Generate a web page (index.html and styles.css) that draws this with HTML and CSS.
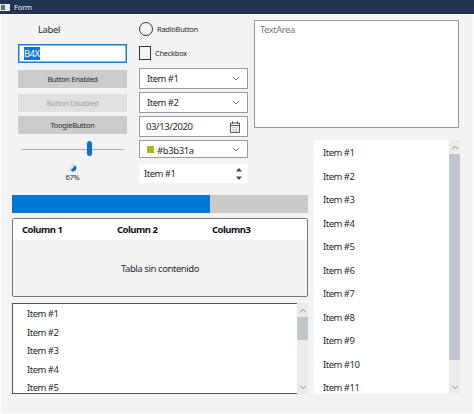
FILE: index.html
```
<!DOCTYPE html>
<html lang="en">
<head>
<meta charset="utf-8">
<title>Form</title>
<link rel="stylesheet" href="styles.css">
</head>
<body>
<header class="titlebar"><span class="app-icon"></span><span>Form</span></header>
<main class="form">
  <section class="controls">
    <div class="col basic">
      <div class="label">Label</div>
      <div class="input"><span class="selected">B4X</span></div>
      <div class="button">Button Enabled</div>
      <div class="button disabled">Button Disabled</div>
      <div class="button toggle">ToogleButton</div>
      <div class="slider"><span class="thumb"></span></div>
      <div class="indicator">
        <svg width="8" height="8" viewBox="0 0 8 8"><circle cx="4" cy="4" r="3.5" fill="#b5d8f8"/><path d="M4 4 6 1.500A3.200 3.200 0 0 1 2 6.500Z" fill="#0f62bc"/><path d="M4 4H1.500V1.500H4Z" fill="#f4f9ff"/></svg>
        <span class="pct">67%</span>
      </div>
    </div>
    <div class="col choices">
      <div class="option radio"><span class="circle"></span><span>RadioButton</span></div>
      <div class="option check"><span class="box"></span><span>Checkbox</span></div>
      <div class="combo"><span>Item #1</span><svg class="chev" viewBox="0 0 8 5"><path d="M.7.7 4 4 7.3.7"/></svg></div>
      <div class="combo"><span>Item #2</span><svg class="chev" viewBox="0 0 8 5"><path d="M.7.7 4 4 7.3.7"/></svg></div>
      <div class="combo date"><span>03/13/2020</span><svg class="cal" viewBox="0 0 10 12"><path d="M.5 2h9v9.5h-9ZM.5 4.5h9M2.5.3V3M7.5.3V3"/><path class="grid" d="M2 6.5h6M2 8.3h6M2 10h6M3.5 5.5v5.500M6.500 5.500v5.500"/></svg></div>
      <div class="combo color"><span class="swatch"></span><span class="hex">#b3b31a</span><svg class="chev" viewBox="0 0 8 5"><path d="M.7.7 4 4 7.3.7"/></svg></div>
      <div class="spinner"><span>Item #1</span><svg width="6" height="12" viewBox="0 0 6 12"><path d="M0 3.500 3 0l3 3.500ZM0 8.500h6L3 12Z" fill="#444"/></svg></div>
    </div>
  </section>
  <div class="textarea">TextArea</div>
  <section class="list large">
    <ul>
      <li>Item #1</li><li>Item #2</li><li>Item #3</li><li>Item #4</li><li>Item #5</li><li>Item #6</li><li>Item #7</li><li>Item #8</li><li>Item #9</li><li>Item #10</li><li>Item #11</li>
    </ul>
    <div class="scroll"><svg class="arrow" viewBox="0 0 8 5"><path d="M1.200 4.300 4 1.300l2.800 3"/></svg><span class="bar"></span><svg class="arrow" viewBox="0 0 8 5"><path d="M1.200.700 4 3.700 6.800.700"/></svg></div>
  </section>
  <section class="bottom">
    <div class="progress"><span class="fill"></span></div>
    <div class="table">
      <div class="head"><span>Column 1</span><span>Column 2</span><span>Column3</span></div>
      <div class="empty">Tabla sin contenido</div>
    </div>
    <section class="list small">
      <ul><li>Item #1</li><li>Item #2</li><li>Item #3</li><li>Item #4</li><li>Item #5</li></ul>
      <div class="scroll"><svg class="arrow" viewBox="0 0 8 5"><path d="M1.200 4.300 4 1.300l2.800 3"/></svg><span class="bar"></span><svg class="arrow" viewBox="0 0 8 5"><path d="M1.200.700 4 3.700 6.800.700"/></svg></div>
    </section>
  </section>
</main>
</body>
</html>
```
FILE: styles.css
```
* { box-sizing: border-box; }
body {
  margin: 0;
  width: 474px;
  height: 414px;
  overflow: hidden;
  background: #fafafa;
  color: #2b2b2b;
  font: 9.5px/12px "Noto Sans", "Open Sans", sans-serif;
  letter-spacing: -0.5px;
}
.titlebar {
  display: flex;
  align-items: center;
  gap: 4px;
  height: 14px;
  background: #213454;
  color: #f0f2f5;
  font-size: 7.5px;
  letter-spacing: -0.15px;
}
.app-icon {
  width: 10px;
  height: 7px;
  border: 1px solid #e4e8eb;
  background: linear-gradient(90deg, #52736f 0 4px, #e9ecee 4px);
}
.form {
  display: grid;
  grid-template-columns: 242px 60px 146px;
  grid-template-rows: 120px 55px 199px;
  width: 470px;
  height: 399px;
  margin-left: 2px;
  padding: 6px 0 0 10px;
  background: #f3f3f3;
}
.controls {
  grid-area: 1 / 1 / 3 / 2;
  display: flex;
  gap: 12px;
  padding-left: 6px;
}
.col { display: flex; flex-direction: column; flex: none; width: 109px; }
.label { height: 24px; padding: 4px 0 0 20px; letter-spacing: -0.4px; }
.input {
  height: 19px;
  margin-bottom: 7px;
  padding: 2px 5px;
  border: 1px solid #1680d8;
  box-shadow: inset 0 0 0 0.5px #1680d8;
  background: #fff;
}
.selected {
  display: block;
  width: 16px;
  height: 13px;
  background: #0f78d4;
  color: #fff;
  font-size: 9.5px;
  letter-spacing: -0.6px;
  line-height: 13px;
}
.button {
  height: 18px;
  margin-bottom: 6px;
  background: #ccc;
  font-size: 7.5px;
  letter-spacing: -0.3px;
  line-height: 19px;
  text-align: center;
}
.disabled { margin-bottom: 4px; background: #e1e1e1; color: #a3a3a3; }
.toggle { margin-bottom: 7px; }
.slider {
  height: 16px;
  margin: 0 3px;
  padding-left: 66px;
  background: linear-gradient(#aaa, #aaa) 0 8px / 100% 1px no-repeat;
}
.thumb { display: block; width: 5px; height: 15px; border-radius: 3px; background: #0872cf; }
.indicator {
  display: flex;
  flex-direction: column;
  align-items: center;
  padding-top: 7px;
  font-size: 7.5px;
  letter-spacing: -0.25px;
}
.pct { line-height: 11px; }
.option { display: flex; align-items: center; font-size: 7.5px; letter-spacing: -0.28px; }
.radio { gap: 4px; height: 18px; margin-bottom: 7px; }
.circle { width: 14px; height: 14px; border: 1px solid #333; border-radius: 50%; }
.check { gap: 4px; height: 16px; margin-bottom: 7px; }
.box { width: 12px; height: 14px; border: 1px solid #333; }
.combo {
  display: flex;
  align-items: center;
  justify-content: space-between;
  height: 21px;
  margin-bottom: 3px;
  padding: 0 7px;
  border: 1px solid #999;
  background: #fff;
}
.chev { width: 8px; height: 5px; fill: none; stroke: #555; stroke-width: 0.8; }
.date { padding-left: 6px; }
.date span { letter-spacing: -0.4px; }
.cal { width: 10px; height: 12px; fill: none; stroke: #444; stroke-width: 0.9; }
.cal .grid { stroke: #aaa; stroke-width: 0.5; }
.color { height: 18px; margin-bottom: 6px; }
.swatch { width: 7px; height: 7px; margin-top: 1px; background: #b3b31a; }
.hex { height: 9px; margin: 1px auto 0 3px; overflow: hidden; line-height: 11px; letter-spacing: -0.4px; }
.spinner {
  display: flex;
  align-items: center;
  justify-content: space-between;
  height: 19px;
  padding: 0 6px 0 5px;
  background: #fff;
}
.textarea {
  grid-area: 1 / 2 / 2 / 4;
  width: 205px;
  height: 108px;
  padding: 3px 5px;
  border: 1px solid #999;
  background: #fff;
  color: #777;
  letter-spacing: -0.5px;
}
.list { display: flex; background: #fff; }
ul { flex: 1; height: 100%; margin: 0; padding: 0; overflow: hidden; list-style: none; }
.large { grid-area: 2 / 3 / 4 / 4; height: 254px; }
.large ul { padding-left: 9px; }
.large li { height: 23.5px; line-height: 25px; }
.bottom { grid-area: 3 / 1 / 4 / 3; width: 296px; }
.progress { height: 18px; margin-bottom: 5px; background: #cbcbcb; }
.fill { display: block; width: 198px; height: 100%; background: #0078d7; }
.table { height: 79px; margin-bottom: 6px; border: 1px solid #777; border-radius: 2px; }
.head {
  display: grid;
  grid-template-columns: 95px 95px 1fr;
  height: 21px;
  padding-left: 9px;
  background: #fff;
  color: #111;
  font-weight: 700;
  line-height: 22px;
}
.empty { line-height: 58px; text-align: center; letter-spacing: -0.42px; }
.small { height: 91px; }
.small ul { padding-left: 14px; border: 1px solid #555; border-right: 0; }
.small li { height: 18.6px; line-height: 19px; }
.scroll {
  display: flex;
  flex-direction: column;
  align-items: center;
  justify-content: space-between;
  width: 11px;
  padding: 5px 0 4px;
  background: #ebebeb;
}
.arrow { flex: none; width: 8px; height: 5px; fill: none; stroke: #777; stroke-width: 0.8; }
.bar { width: 11px; height: 206px; margin: 4px 0 auto; background: #c0c6ca; }
.small .bar { height: 23px; }
```
